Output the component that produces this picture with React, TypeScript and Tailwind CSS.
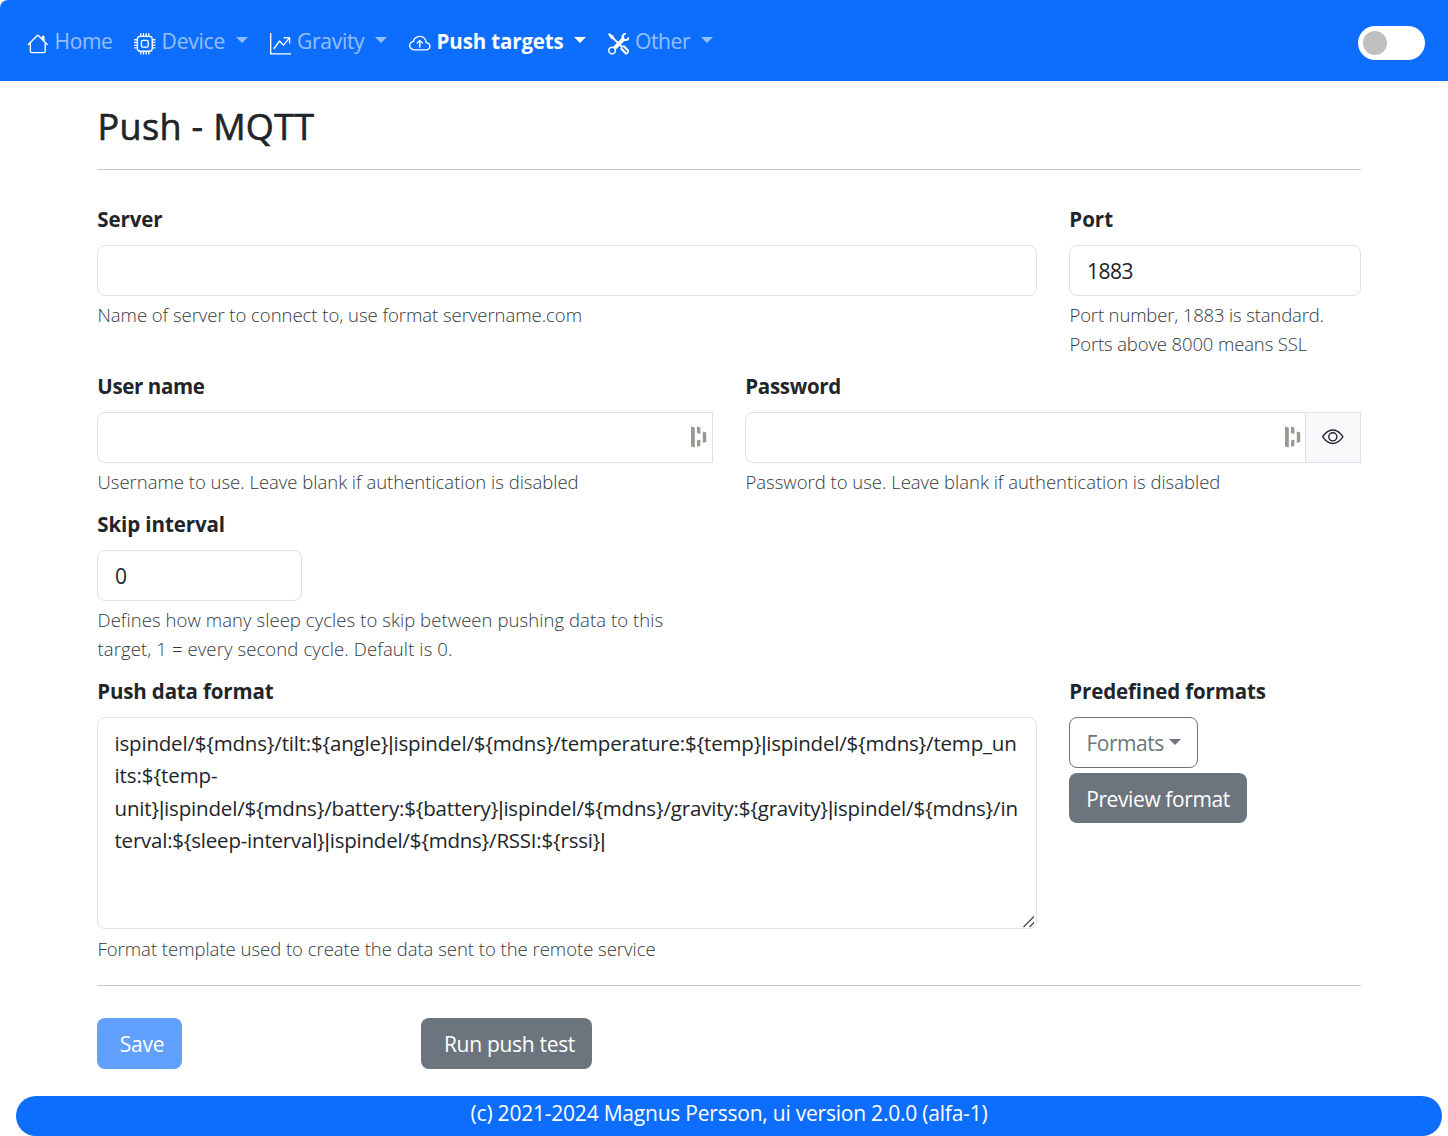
import type { ReactNode } from "react";
import { BsHouse, BsCpu, BsGraphUpArrow, BsCloudArrowUp, BsTools, BsEye } from "react-icons/bs";

function Caret({ className = "" }: { className?: string }) {
  return (
    <svg viewBox="0 0 12 6" className={`h-[6px] w-[12px] shrink-0 fill-current ${className}`}>
      <path d="M0 0H12L6 6Z" />
    </svg>
  );
}

type NavItemProps = { icon: ReactNode; label: string; className: string; labelClass?: string; caret?: string };

function NavItem({ icon, label, className, labelClass = "", caret }: NavItemProps) {
  return (
    <div className={`flex h-8 shrink-0 items-center whitespace-nowrap ${className}`}>
      <span className="mt-[4px] mr-[6px] text-[21.6px] text-white">{icon}</span>
      <span className={labelClass}>{label}</span>
      {caret && <Caret className={`-mt-[4px] ${caret}`} />}
    </div>
  );
}

function Label({ children, className = "" }: { children: ReactNode; className?: string }) {
  return (
    <div className={`mb-[10px] h-8 pl-[0.3px] whitespace-nowrap text-[20.5px] leading-8 font-bold ${className}`}>
      {children}
    </div>
  );
}

function Help({ children, className = "mt-[4px]" }: { children: ReactNode; className?: string }) {
  return (
    <div
      className={`flex flex-col pl-[0.5px] whitespace-nowrap text-[18.5px] leading-[29px] font-light text-[#34393e] ${className}`}
    >
      {children}
    </div>
  );
}

function Field({ children, className = "" }: { children?: ReactNode; className?: string }) {
  return (
    <div className={`flex h-[51px] items-center border border-[#dee2e6] bg-white pl-[17px] ${className}`}>{children}</div>
  );
}

function ManagerMark({ className = "" }: { className?: string }) {
  return (
    <svg viewBox="0 0 16 22" className={`-mt-[2px] h-[22px] w-[16px] fill-[#9b9793] ${className}`}>
      <path d="M0 .6 3.8 1.6V21.4L0 20.4ZM6 .6 9.4 1.6V8L6 7ZM6 14.4 9.4 13.4V19.8L6 20.8ZM11.8 5.6 15.2 6.6V16L11.8 17Z" />
    </svg>
  );
}

function TemplateLine({ text, className }: { text: string; className: string }) {
  return (
    <div className={`h-[32.4px] ${className}`}>
      {text.split(/(\|)/).map((part, i) =>
        part === "|" ? (
          <span key={i} className="font-['Liberation_Sans',sans-serif] leading-none">
            |
          </span>
        ) : (
          part
        ),
      )}
    </div>
  );
}

export default function App() {
  return (
    <div className="h-[1136px] w-[1448px] overflow-hidden bg-white font-['Open_Sans',sans-serif] text-[21px] text-[#212529]">
      <header className="flex h-[81px] items-start rounded-tl-[8px] bg-[#0d6efd] pt-[26px] pr-[23px] pl-[27px] text-white/55">
        <NavItem icon={<BsHouse />} label="Home" className="w-[107px] tracking-[-0.4px]" />
        <NavItem icon={<BsCpu />} label="Device" className="w-[135.5px] tracking-[-0.2px]" caret="ml-[11px]" />
        <NavItem icon={<BsGraphUpArrow />} label="Gravity" className="w-[139.5px] tracking-[-0.3px]" caret="ml-[11px]" />
        <NavItem
          icon={<BsCloudArrowUp />}
          label="Push targets"
          className="w-[198.5px] text-[20.5px] font-bold tracking-[-0.14px] text-white"
          labelClass="-mt-[2px]"
          caret="ml-[10.5px]"
        />
        <NavItem icon={<BsTools />} label="Other" className="tracking-[-0.4px]" caret="ml-[10.5px]" />
        <div className="ml-auto flex h-[34px] w-[67px] items-center rounded-full bg-white pl-[5px]">
          <div className="size-[24px] rounded-full bg-[#bfbfbf]" />
        </div>
      </header>

      <main className="ml-[97px] w-[1264px]">
        <h1 className="h-[88px] pt-[20px] pl-[0.5px] text-[36px] leading-[52px] font-medium tracking-[0.34px] [-webkit-text-stroke:0.6px_#212529]">
          Push - MQTT
        </h1>
        <hr className="mb-[33px] border-t border-[#c8c9ca]" />

        <div className="flex h-[167px] gap-8">
          <div className="w-[940px]">
            <Label className="tracking-[-0.1px]">Server</Label>
            <Field className="rounded-[8px]" />
            <Help>
              <span className="tracking-[-0.03px]">Name of server to connect to, use format servername.com</span>
            </Help>
          </div>
          <div className="w-[292px]">
            <Label>Port</Label>
            <Field className="rounded-[8px] pt-[2px] tracking-[-0.5px]">1883</Field>
            <Help>
              <span className="tracking-[-0.15px]">Port number, 1883 is standard.</span>
              <span className="tracking-[-0.13px]">Ports above 8000 means SSL</span>
            </Help>
          </div>
        </div>

        <div className="flex h-[138px] gap-8">
          <div className="w-[616px]">
            <Label className="tracking-[-0.38px]">User name</Label>
            <Field className="justify-end rounded-l-[8px] pr-[5px]">
              <ManagerMark />
            </Field>
            <Help>
              <span className="tracking-[-0.01px]">Username to use. Leave blank if authentication is disabled</span>
            </Help>
          </div>
          <div className="w-[616px]">
            <Label className="tracking-[-0.32px]">Password</Label>
            <div className="flex">
              <Field className="w-[561px] justify-end rounded-l-[8px] pr-[4px]">
                <ManagerMark />
              </Field>
              <div className="flex h-[51px] w-[55px] items-center justify-center border border-l-0 border-[#dee2e6] bg-[#f8f9fa] text-[21.6px]">
                <BsEye className="-mt-[2px]" />
              </div>
            </div>
            <Help>
              <span className="tracking-[-0.01px]">Password to use. Leave blank if authentication is disabled</span>
            </Help>
          </div>
        </div>

        <div className="h-[167px]">
          <Label className="tracking-[-0.1px]">Skip interval</Label>
          <Field className="w-[205px] rounded-[8px] pt-[2px]">0</Field>
          <Help>
            <span className="tracking-[0.07px]">Defines how many sleep cycles to skip between pushing data to this</span>
            <span className="tracking-[0.11px]">target, 1 = every second cycle. Default is 0.</span>
          </Help>
        </div>

        <div className="flex h-[310px] gap-8">
          <div className="w-[940px]">
            <Label className="tracking-[-0.16px]">Push data format</Label>
            <div className="relative h-[212px] rounded-[8px] border border-[#dee2e6] pt-[9px] pl-[16.5px] text-[20.5px] leading-[32.4px] whitespace-nowrap">
              <TemplateLine
                className="tracking-[-0.195px]"
                text={"ispindel/${mdns}/tilt:${angle}|ispindel/${mdns}/temperature:${temp}|ispindel/${mdns}/temp_un"}
              />
              <TemplateLine className="tracking-[-0.08px]" text={"its:${temp-"} />
              <TemplateLine
                className="tracking-[-0.178px]"
                text={"unit}|ispindel/${mdns}/battery:${battery}|ispindel/${mdns}/gravity:${gravity}|ispindel/${mdns}/in"}
              />
              <TemplateLine
                className="tracking-[-0.22px]"
                text={"terval:${sleep-interval}|ispindel/${mdns}/RSSI:${rssi}|"}
              />
              <svg
                viewBox="0 0 12 12"
                className="absolute right-[1px] bottom-[0px] size-[12px] fill-none stroke-[#4a4a4a] stroke-[1.3]"
              >
                <path d="M.5 11 11 .5M6.5 11 11 6.5" />
              </svg>
            </div>
            <Help className="mt-[5px]">
              <span className="tracking-[-0.02px]">Format template used to create the data sent to the remote service</span>
            </Help>
          </div>
          <div className="flex w-[292px] flex-col items-start">
            <Label className="tracking-[-0.14px]">Predefined formats</Label>
            <button className="mb-[5px] flex h-[51px] w-[129px] items-center rounded-[8px] border border-[#6c757d] pt-[2px] pl-[16.5px] tracking-[-0.5px] text-[#6c757d]">
              Formats
              <Caret className="-mt-[4px] ml-[5.5px]" />
            </button>
            <button className="h-[50px] w-[178px] rounded-[8px] bg-[#6c757d] pt-[3px] whitespace-nowrap tracking-[-0.4px] text-white">
              Preview format
            </button>
          </div>
        </div>

        <hr className="mb-[32px] border-t border-[#c8c9ca]" />
        <div className="flex h-[78px] items-start">
          <button className="h-[51px] w-[85px] rounded-[8px] bg-[#0d6efd] pt-[2px] pl-[5px] tracking-[-0.2px] text-white opacity-65">
            Save
          </button>
          <button className="ml-[239px] h-[51px] w-[171px] rounded-[8px] bg-[#6c757d] pt-[2px] pl-[6px] whitespace-nowrap tracking-[-0.3px] text-white">
            Run push test
          </button>
        </div>
      </main>

      <footer className="ml-[16px] h-[40px] w-[1426px] rounded-full bg-[#0d6efd] pt-[1px] text-center leading-8 tracking-[-0.22px] text-white">
        (c) 2021-2024 Magnus Persson, ui version 2.0.0 (alfa-1)
      </footer>
    </div>
  );
}
